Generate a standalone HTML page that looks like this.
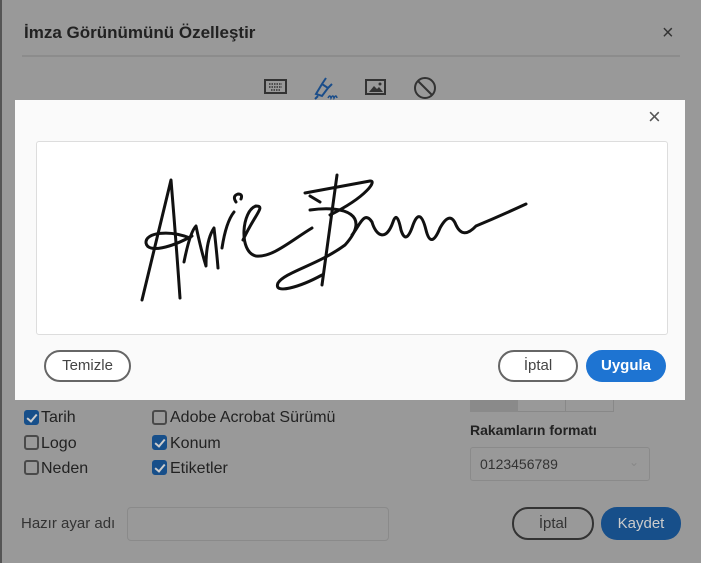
<!DOCTYPE html>
<html><head><meta charset="utf-8"><style>
*{box-sizing:border-box;margin:0;padding:0}
body{width:701px;height:563px;background:#999;position:relative;overflow:hidden;font-family:"Liberation Sans",sans-serif;color:#1e1e1e}
.a{position:absolute}
.cb{position:absolute;width:15px;height:15px;border:2px solid #4a4a4a;border-radius:3px}
.cb.on{background:#174f8a;border-color:#174f8a}
.cb.on::after{content:"";position:absolute;left:3px;top:0px;width:4px;height:8px;border:solid #ccc;border-width:0 2px 2px 0;transform:rotate(40deg)}
.lbl{position:absolute;font-size:16px;color:#222}
.btn{position:absolute;border-radius:16px;font-size:15px;text-align:center}
</style></head><body>
<div class="a" style="left:0;top:0;width:2px;height:563px;background:#555"></div>
<div class="a" style="left:24px;top:23px;font-size:17px;font-weight:bold;color:#222">İmza Görünümünü Özelleştir</div>
<div class="a" style="left:662px;top:22px;font-size:20px;color:#333">×</div>
<div class="a" style="left:22px;top:55px;width:658px;height:2px;background:#8c8c8c"></div>
<svg class="a" style="left:264px;top:78px" width="24" height="18"><rect x="1" y="2" width="21" height="13" fill="none" stroke="#333" stroke-width="2"/><path d="M5 6h13M5 9h13M7 12h9" stroke="#333" stroke-width="1.5" stroke-dasharray="1.5 1"/></svg>
<svg class="a" style="left:312px;top:74px" width="26" height="28"><path d="M4 20 L10 10 L16 14 L10 22 Z M10 10 L14 4 M16 14 L20 10 M6 22 L3 25" fill="none" stroke="#1a4d8a" stroke-width="2"/><path d="M16 24 q2 -4 3 0 q2 -4 3 0 q2 -4 3 0" fill="none" stroke="#1a4d8a" stroke-width="1.5"/></svg>
<svg class="a" style="left:365px;top:78px" width="22" height="18"><rect x="1" y="2" width="19" height="14" fill="none" stroke="#333" stroke-width="2"/><path d="M4 14 L9 8 L12 11 L14 9 L18 14 Z" fill="#333"/><circle cx="15" cy="6" r="1.5" fill="#333"/></svg>
<svg class="a" style="left:413px;top:76px" width="24" height="24"><circle cx="12" cy="12" r="10" fill="none" stroke="#333" stroke-width="2"/><path d="M5 5 L19 19" stroke="#333" stroke-width="2"/></svg>
<div class="a" style="left:15px;top:100px;width:670px;height:300px;background:#fafafa"></div>
<div class="a" style="left:648px;top:104px;font-size:22px;color:#555">×</div>
<div class="a" style="left:36px;top:141px;width:632px;height:194px;background:#fff;border:1px solid #ddd;border-radius:3px"></div>
<svg class="a" style="left:0;top:0" width="701" height="563"><g fill="none" stroke="#111" stroke-width="3" stroke-linecap="round" stroke-linejoin="round">
<path d="M142 300 L171 180 Q176 240 180 298"/>
<path d="M190 238 C170 230 145 232 146 243 C148 254 172 247 192 236"/>
<path d="M184 262 Q190 232 196 226 Q201 250 206 266 Q206 240 214 228 Q217 255 218 268"/>
<path d="M222 248 Q226 222 234 212"/>
<path d="M236 202 q-4 -6 2 -8 q5 0 3 5"/>
<path d="M243 240 C255 214 266 206 256 206 C242 210 238 252 256 256 C272 258 292 240 312 228"/>
<path d="M305 193 L370 181 C377 180 368 196 330 215"/>
<path d="M337 175 L322 285"/>
<path d="M310 210 C345 205 372 215 345 245 C318 265 285 272 278 283 C273 295 300 287 322 275"/>
<path d="M310 196 L320 202"/>
<path d="M352 235 C360 225 364 210 372 222 C376 236 386 242 393 222 Q397 210 401 230 Q406 246 413 225 Q420 206 426 230 Q431 250 440 228 Q450 210 456 225 Q463 240 476 226 Q500 216 526 204"/>
</g></svg>
<div class="btn" style="left:44px;top:350px;width:87px;height:32px;border:2px solid #666;background:#fff;color:#444;line-height:28px">Temizle</div>
<div class="btn" style="left:498px;top:350px;width:80px;height:32px;border:2px solid #666;background:#fff;color:#444;line-height:28px">İptal</div>
<div class="btn" style="left:586px;top:350px;width:80px;height:32px;background:#1e74d2;color:#fff;font-weight:bold;line-height:32px">Uygula</div>
<div class="a" style="left:470px;top:400px;width:144px;height:12px;border:1px solid #888;border-top:none"></div>
<div class="a" style="left:470px;top:400px;width:48px;height:12px;background:#8a8a8a"></div>
<div class="a" style="left:565px;top:400px;width:1px;height:12px;background:#888"></div>
<div class="cb on" style="left:24px;top:410px"></div><div class="lbl" style="left:41px;top:409px">Tarih</div>
<div class="cb" style="left:24px;top:435px"></div><div class="lbl" style="left:41px;top:435px">Logo</div>
<div class="cb" style="left:24px;top:460px"></div><div class="lbl" style="left:41px;top:460px">Neden</div>
<div class="cb" style="left:152px;top:410px"></div><div class="lbl" style="left:170px;top:409px">Adobe Acrobat Sürümü</div>
<div class="cb on" style="left:152px;top:435px"></div><div class="lbl" style="left:170px;top:435px">Konum</div>
<div class="cb on" style="left:152px;top:460px"></div><div class="lbl" style="left:170px;top:460px">Etiketler</div>
<div class="a" style="left:470px;top:422px;font-size:14px;font-weight:bold;color:#222">Rakamların formatı</div>
<div class="a" style="left:470px;top:447px;width:180px;height:34px;border:1px solid #8a8a8a;border-radius:3px;font-size:14px;color:#333;padding:8px 9px">0123456789<span style="position:absolute;right:10px;top:7px;color:#888;font-size:12px">⌄</span></div>
<div class="a" style="left:21px;top:515px;font-size:15px;color:#333">Hazır ayar adı</div>
<div class="a" style="left:127px;top:507px;width:262px;height:34px;border:1px solid #8a8a8a;border-radius:4px"></div>
<div class="btn" style="left:512px;top:507px;width:82px;height:33px;border:2px solid #333;color:#333;line-height:29px">İptal</div>
<div class="btn" style="left:601px;top:507px;width:80px;height:33px;background:#174f8a;color:#ccc;line-height:33px">Kaydet</div>
</body></html>
